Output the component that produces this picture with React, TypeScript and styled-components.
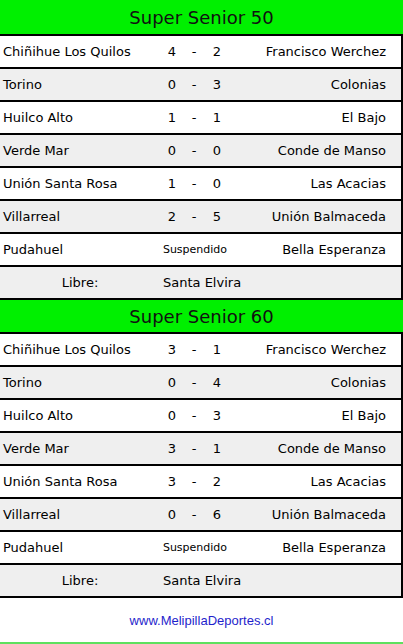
import React from "react";
import styled, { createGlobalStyle } from "styled-components";

const Global = createGlobalStyle`
  html, body { margin: 0; padding: 0; background: #fff; }
  body { font-family: "DejaVu Sans", Verdana, sans-serif; }
`;

const Page = styled.div`
  width: 403px;
  display: flex;
  flex-direction: column;
`;

const Section = styled.section`
  display: flex;
  flex-direction: column;
  border-bottom: 2px solid #000;
`;

const Header = styled.h2<{ $h: number }>`
  margin: 0;
  height: ${(p) => p.$h}px;
  background: #00f000;
  display: flex;
  align-items: center;
  justify-content: center;
  font-weight: normal;
  font-size: 18px;
  color: #111;
`;

const Row = styled.div<{ $alt: boolean }>`
  display: grid;
  grid-template-columns: 154px 36px 8px 38px 1fr;
  align-items: center;
  height: 31px;
  border-top: 2px solid #000;
  border-right: 2px solid #000;
  background: ${(p) => (p.$alt ? "#efefef" : "#fff")};
  font-size: 13px;
  color: #000;
`;

const Home = styled.span`
  padding-left: 3px;
  white-space: nowrap;
`;

const Score = styled.span`
  text-align: center;
`;

const Away = styled.span`
  text-align: right;
  padding-right: 15px;
  white-space: nowrap;
`;

const Status = styled.span`
  grid-column: 2 / 5;
  text-align: center;
  font-size: 11px;
`;

const FreeLabel = styled.span`
  text-align: center;
  padding-left: 6px;
`;

const FreeTeam = styled.span`
  grid-column: 2 / 6;
  padding-left: 9px;
`;

const Footer = styled.footer`
  height: 44px;
  display: flex;
  align-items: center;
  justify-content: center;
`;

const Site = styled.a`
  font-family: "Liberation Sans", Arial, sans-serif;
  font-size: 13px;
  color: #1f1fcc;
  text-decoration: none;
`;

const Rule = styled.div`
  height: 2px;
  background: #5ee05e;
`;

type Match = { home: string; away: string; score?: [number, number]; status?: string };

const make = (scores: [number, number][]): Match[] => [
  { home: "Chiñihue Los Quilos", away: "Francisco Werchez", score: scores[0] },
  { home: "Torino", away: "Colonias", score: scores[1] },
  { home: "Huilco Alto", away: "El Bajo", score: scores[2] },
  { home: "Verde Mar", away: "Conde de Manso", score: scores[3] },
  { home: "Unión Santa Rosa", away: "Las Acacias", score: scores[4] },
  { home: "Villarreal", away: "Unión Balmaceda", score: scores[5] },
  { home: "Pudahuel", away: "Bella Esperanza", status: "Suspendido" },
];

const sections = [
  {
    title: "Super Senior 50",
    h: 34,
    matches: make([[4, 2], [0, 3], [1, 1], [0, 0], [1, 0], [2, 5]]),
    free: "Santa Elvira",
  },
  {
    title: "Super Senior 60",
    h: 32,
    matches: make([[3, 1], [0, 4], [0, 3], [3, 1], [3, 2], [0, 6]]),
    free: "Santa Elvira",
  },
];

export default function App() {
  return (
    <Page>
      <Global />
      {sections.map((s) => (
        <Section key={s.title}>
          <Header $h={s.h}>{s.title}</Header>
          {s.matches.map((m, i) => (
            <Row key={m.home} $alt={i % 2 === 1}>
              <Home>{m.home}</Home>
              {m.score ? (
                <>
                  <Score>{m.score[0]}</Score>
                  <Score>-</Score>
                  <Score>{m.score[1]}</Score>
                </>
              ) : (
                <Status>{m.status}</Status>
              )}
              <Away>{m.away}</Away>
            </Row>
          ))}
          <Row $alt>
            <FreeLabel>Libre:</FreeLabel>
            <FreeTeam>{s.free}</FreeTeam>
          </Row>
        </Section>
      ))}
      <Footer>
        <Site href="#">www.MelipillaDeportes.cl</Site>
      </Footer>
      <Rule />
    </Page>
  );
}
